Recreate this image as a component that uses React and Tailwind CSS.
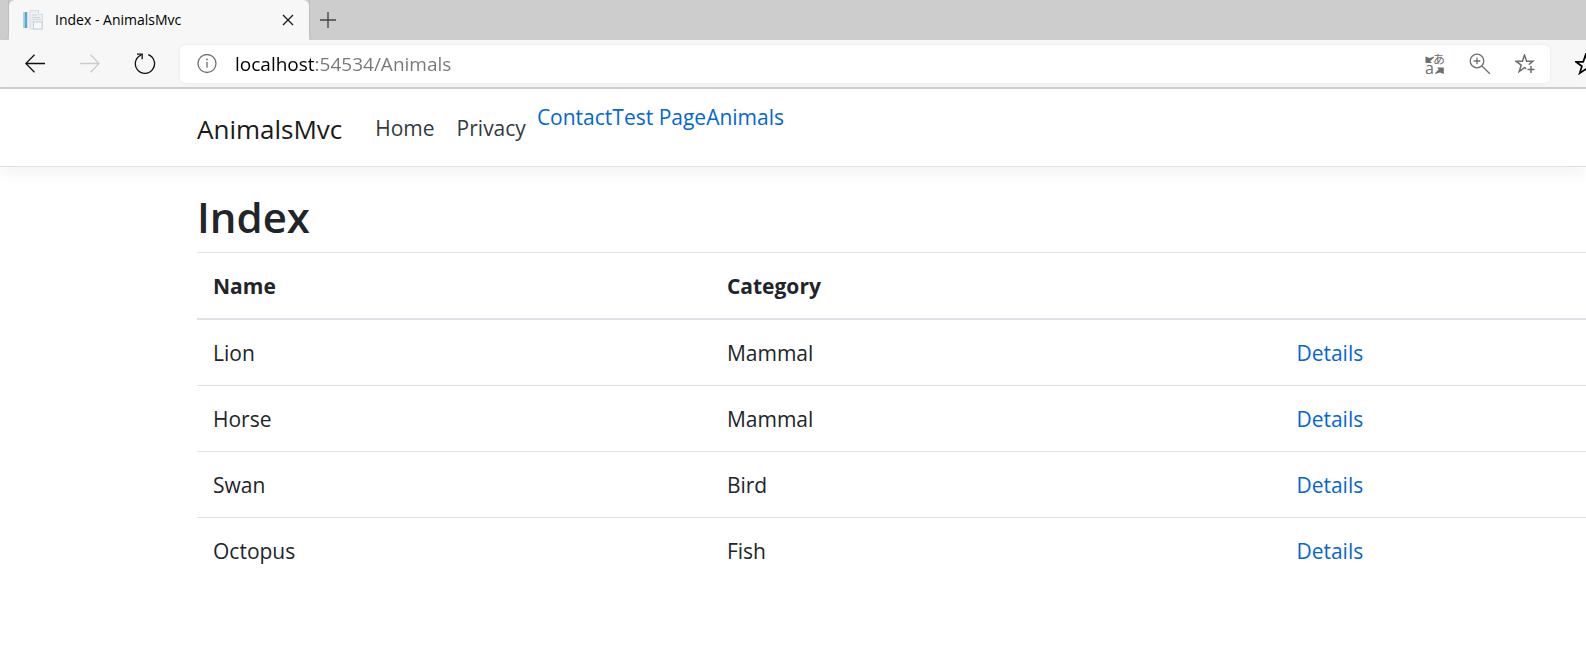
import React from "react";

const animals = [
  { name: "Lion", category: "Mammal" },
  { name: "Horse", category: "Mammal" },
  { name: "Swan", category: "Bird" },
  { name: "Octopus", category: "Fish" },
];

const stroke = {
  fill: "none",
  stroke: "currentColor",
  strokeWidth: 1.3,
};

function PageIcon() {
  return (
    <svg width="20" height="20" viewBox="0 0 20 20" aria-hidden="true">
      <rect x="0.5" y="2" width="4" height="16" fill="#58a9d6" />
      <rect x="0.5" y="2" width="1.2" height="16" fill="#b9d9ea" />
      <rect x="4.5" y="1" width="2.500" height="17" fill="#eef2f5" />
      <path d="M7 0.5h8.5l4 4v14.5H7z" fill="#edf0f3" stroke="#d3d9de" strokeWidth="0.8" />
      <path d="M15.5 0.5v4h4" fill="#fbfcfd" stroke="#cdd4da" strokeWidth="0.8" />
      <path d="M9 5h5M9 7.5h8" stroke="#ccd5dc" strokeWidth="1" />
      <path d="M9 13V9.500h9" fill="none" stroke="#ccd5dc" strokeWidth="0.8" />
      <rect x="10.5" y="12" width="8.5" height="7" fill="#f6f8fa" stroke="#bcc7cf" strokeWidth="0.8" />
    </svg>
  );
}

function CloseIcon() {
  return (
    <svg width="12" height="12" viewBox="0 0 12 12" aria-hidden="true">
      <path d="M1 1l10 10M11 1L1 11" {...stroke} />
    </svg>
  );
}

function PlusIcon() {
  return (
    <svg width="18" height="18" viewBox="0 0 18 18" aria-hidden="true">
      <path d="M9 1v16M1 9h16" {...stroke} />
    </svg>
  );
}

function ArrowIcon({ flipped }) {
  return (
    <svg width="20" height="20" viewBox="0 0 20 20" aria-hidden="true">
      <path d={flipped ? "M0 9.500h19M10.5 0.8l8.7 8.7-8.7 8.7" : "M20 9.500H1M9.5 0.8L0.8 9.500l8.7 8.7"} {...stroke} />
    </svg>
  );
}

function ReloadIcon() {
  return (
    <svg width="22" height="22" viewBox="0 0 22 22" aria-hidden="true">
      <path d="M14.2 1.700A9.6 9.6 0 1 1 7.4 1.800" {...stroke} />
      <path d="M3 1.100h5.2v5.2" {...stroke} />
    </svg>
  );
}

function InfoIcon() {
  return (
    <svg width="20" height="20" viewBox="0 0 20 20" aria-hidden="true">
      <circle cx="10" cy="9.500" r="9" {...stroke} />
      <path d="M10 7.700v6" {...stroke} />
      <circle cx="10" cy="5.4" r="0.9" fill="currentColor" />
    </svg>
  );
}

function TranslateIcon() {
  return (
    <svg width="20" height="28" viewBox="0 0 20 28" className="overflow-visible" aria-hidden="true">
      <path d="M0.5 6.5v6.5h6.500L5.200 11.200 9 7.500V6.500L4.500 8z" fill="currentColor" />
      <path d="M18.800 24v-6.500h-6.800l1.800 1.800-3.500 3.700V24l4.500-1.500z" fill="currentColor" />
      <text x="0" y="24" fontSize="16" fill="currentColor" className="font-['Open_Sans',sans-serif]">a</text>
      <text x="8" y="13.500" fontSize="12" fill="currentColor" className="font-['Noto_Sans_CJK_JP',sans-serif]">あ</text>
    </svg>
  );
}

function ZoomInIcon() {
  return (
    <svg width="22" height="22" viewBox="0 0 22 22" aria-hidden="true">
      <circle cx="8" cy="8" r="6.8" {...stroke} />
      <path d="M13 13l7.800 7.800M8 4.700v6.600M4.700 8h6.600" {...stroke} />
    </svg>
  );
}

function AddFavoriteIcon() {
  return (
    <svg width="20" height="20" viewBox="0 0 20 20" aria-hidden="true">
      <path d="M11.300 14.700L9.500 13.600 4.200 17.600 6.200 11.100 1 7.200h6.400L9.500 1l2.100 6.200H18l-4.200 3.400" {...stroke} strokeWidth="1.500" />
      <path d="M16 12v7M12.500 15.500h7" {...stroke} strokeWidth="1.500" />
    </svg>
  );
}

function FavoritesIcon() {
  return (
    <svg width="24" height="22" viewBox="0 0 24 22" aria-hidden="true">
      <path d="M14 18.500l-3.500-2.300-5.800 4 2.200-7L1 8.900h7.200L10.500 2l2.300 6.900H22M14 13h9" {...stroke} strokeWidth="1.700" />
    </svg>
  );
}

function BrowserChrome() {
  return (
    <div>
      <div className="flex h-10 items-stretch bg-[#cdcdcd]">
        <div className="w-[9px] rounded-br-md border-r border-[#bebebe]" />
        <div className="flex w-[300px] items-center rounded-t-md bg-[#f7f7f7] pr-[15px] pl-[14px]">
          <PageIcon />
          <span className="ml-3 flex-1 text-sm text-black">Index - AnimalsMvc</span>
          <button type="button" aria-label="Close tab" className="text-[#1b1b1b]">
            <CloseIcon />
          </button>
        </div>
        <div className="flex flex-1 items-center rounded-bl-md border-l border-[#bebebe] pl-[9px]">
          <button type="button" aria-label="New tab" className="text-[#404040]">
            <PlusIcon />
          </button>
        </div>
      </div>
      <div className="flex h-[49px] items-center overflow-hidden border-b-2 border-[#cfcfcf] bg-[#f7f7f7] pl-[25px]">
        <div className="flex w-[155px] shrink-0 items-center">
          <button type="button" aria-label="Back" className="text-[#101010]">
            <ArrowIcon />
          </button>
          <button type="button" aria-label="Forward" className="ml-[35px] text-[#cccccc]" disabled>
            <ArrowIcon flipped />
          </button>
          <button type="button" aria-label="Reload" className="ml-[34px] text-[#101010]">
            <ReloadIcon />
          </button>
        </div>
        <div className="flex h-[38px] min-w-0 flex-1 items-center rounded-md bg-white pr-[15px] pl-[17px] text-[#6e6e6e] shadow-[0_0_4px_rgba(0,0,0,0.06)]">
          <button type="button" aria-label="Site information">
            <InfoIcon />
          </button>
          <input
            type="text"
            aria-label="Address"
            defaultValue="localhost:54534/Animals"
            className="ml-[18px] min-w-0 flex-1 bg-[linear-gradient(to_right,#000000_79px,#767676_79px)] bg-clip-text text-[19px] leading-7 text-transparent caret-black outline-none"
          />
          <div className="flex items-center gap-6">
            <button type="button" aria-label="Translate">
              <TranslateIcon />
            </button>
            <button type="button" aria-label="Zoom">
              <ZoomInIcon />
            </button>
            <button type="button" aria-label="Add to favorites">
              <AddFavoriteIcon />
            </button>
          </div>
        </div>
        <div className="ml-[25px] w-[11px] shrink-0 overflow-hidden">
          <button type="button" aria-label="Favorites" className="block w-6 text-black">
            <FavoritesIcon />
          </button>
        </div>
      </div>
    </div>
  );
}

function SiteHeader() {
  return (
    <header className="border-b border-[#dee2e6] bg-white shadow-[0_6px_16px_rgba(0,0,0,0.05)]">
      <nav className="flex items-center pt-3 pb-[10px] pl-[197px]">
        <a href="#home" className="mr-[22px] text-[26px] leading-10 text-[#1a1a1a]">
          AnimalsMvc
        </a>
        <ul className="flex text-[#343a40]">
          <li className="p-[11px]">
            <a href="#home">Home</a>
          </li>
          <li className="p-[11px]">
            <a href="#privacy">Privacy</a>
          </li>
          <li className="text-[#0366d6]">
            <a href="#contact">Contact</a>
            <a href="#test">Test Page</a>
            <a href="#animals">Animals</a>
          </li>
        </ul>
      </nav>
    </header>
  );
}

function AnimalsTable() {
  return (
    <table className="w-full table-fixed border-collapse text-left">
      <thead>
        <tr className="border-t border-b-2 border-t-[#dee2e6] border-b-[#dee2e6]">
          <th className="w-[37%] px-4 pt-[17px] pb-[15px] font-bold">Name</th>
          <th className="w-[41%] px-4 pt-[17px] pb-[15px] font-bold">Category</th>
          <th className="px-4 pt-[17px] pb-[15px]" />
        </tr>
      </thead>
      <tbody>
        {animals.map((animal) => (
          <tr key={animal.name} className="border-b border-[#dee2e6] last:border-b-0">
            <td className="px-4 pt-[17px] pb-[15px]">{animal.name}</td>
            <td className="px-4 pt-[17px] pb-[15px]">{animal.category}</td>
            <td className="px-4 pt-[17px] pb-[15px]">
              <a href={"#" + animal.name} className="text-[#0366d6]">
                Details
              </a>
            </td>
          </tr>
        ))}
      </tbody>
    </table>
  );
}

export default function App() {
  return (
    <div className="min-h-screen bg-white font-['Open_Sans','Noto_Sans',sans-serif]">
      <BrowserChrome />
      <div className="text-[21px] leading-[33px] text-[#212529]">
        <SiteHeader />
        <main className="pt-6 pl-[197px]">
          <h1 className="mb-[9px] text-[42px] leading-[52px] font-semibold">Index</h1>
          <AnimalsTable />
        </main>
      </div>
    </div>
  );
}
